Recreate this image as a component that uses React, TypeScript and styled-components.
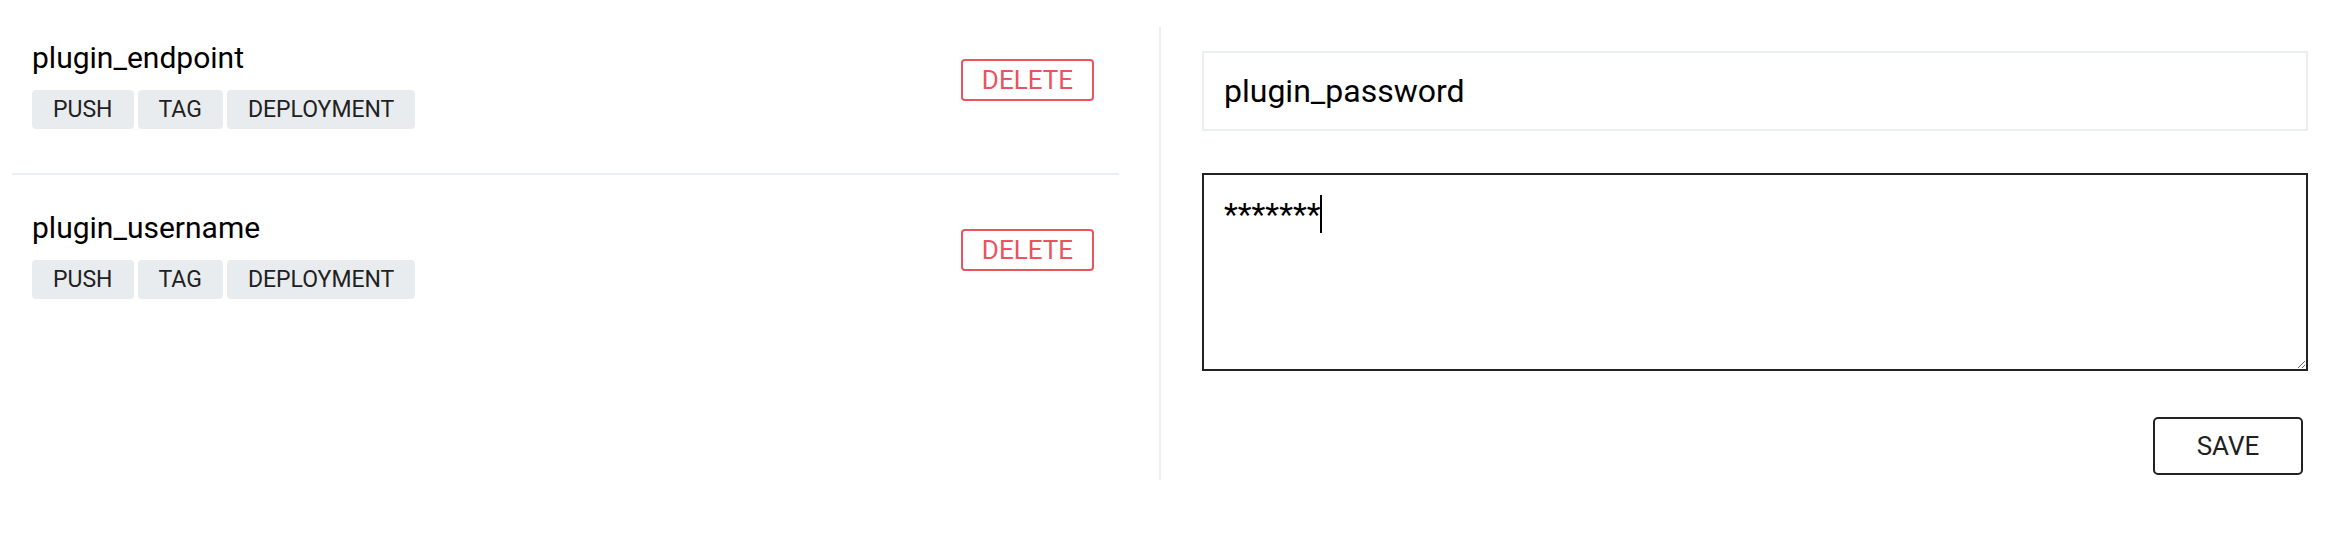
import React from 'react';
import styled, { createGlobalStyle } from 'styled-components';

const GlobalStyle = createGlobalStyle`
  html, body {
    margin: 0;
    padding: 0;
    background: #fff;
    font-family: Roboto, 'Liberation Sans', sans-serif;
  }
  * {
    box-sizing: border-box;
  }
`;

const Page = styled.div`
  display: flex;
  align-items: flex-start;
  padding-top: 5px;
  width: 2332px;
`;

const SecretList = styled.div`
  flex: 0 0 1159px;
  padding: 0 40px 0 12px;
`;

const SecretItem = styled.div`
  display: flex;
  align-items: flex-start;
  justify-content: space-between;
  padding: 35px 25px 44px 20px;

  & + & {
    border-top: 2px solid #eceff1;
  }
`;

const SecretInfo = styled.div`
  display: flex;
  flex-direction: column;
`;

const SecretName = styled.div`
  font-size: 30px;
  line-height: 35px;
  color: #000;
`;

const EventList = styled.div`
  display: flex;
  gap: 4px;
  margin-top: 15px;
`;

const EventTag = styled.span`
  display: inline-block;
  height: 39px;
  line-height: 39px;
  padding: 0 21px;
  font-size: 23px;
  color: #212121;
  background: #e9ecef;
  border-radius: 4px;
`;

const DeleteButton = styled.button`
  margin-top: 19px;
  height: 42px;
  padding: 0 19px;
  font-family: Roboto, 'Liberation Sans', sans-serif;
  font-size: 26px;
  line-height: 38px;
  color: #e9545e;
  background: #fff;
  border: 2px solid #e9545e;
  border-radius: 4px;
  cursor: pointer;
`;

const EditorPanel = styled.div`
  flex: 1;
  display: flex;
  flex-direction: column;
  margin-top: 22px;
  padding: 24px 24px 5px 41px;
  border-left: 2px solid #eceff1;
`;

const NameInput = styled.input`
  width: 100%;
  height: 80px;
  padding: 0 20px;
  font-family: Roboto, 'Liberation Sans', sans-serif;
  font-size: 32px;
  color: #000;
  border: 2px solid #eceff1;
  outline: none;
`;

const ValueWrap = styled.div`
  position: relative;
  margin-top: 42px;
`;

const ValueInput = styled.textarea`
  display: block;
  width: 100%;
  height: 198px;
  padding: 20px;
  font-family: Roboto, 'Liberation Sans', sans-serif;
  font-size: 32px;
  line-height: 38px;
  color: #000;
  border: 2px solid #222;
  outline: none;
  caret-color: transparent;
`;

const Caret = styled.span`
  position: absolute;
  left: 118px;
  top: 22px;
  width: 2px;
  height: 38px;
  background: #000;
`;

const Actions = styled.div`
  display: flex;
  justify-content: flex-end;
  margin-top: 46px;
  padding-right: 5px;
`;

const SaveButton = styled.button`
  width: 150px;
  height: 58px;
  font-family: Roboto, 'Liberation Sans', sans-serif;
  font-size: 26px;
  color: #212121;
  background: #fff;
  border: 2px solid #222;
  border-radius: 5px;
  cursor: pointer;
`;

const secrets = [
  { name: 'plugin_endpoint', events: ['PUSH', 'TAG', 'DEPLOYMENT'] },
  { name: 'plugin_username', events: ['PUSH', 'TAG', 'DEPLOYMENT'] },
];

export default function App() {
  return (
    <>
      <GlobalStyle />
      <Page>
        <SecretList>
          {secrets.map(secret => (
            <SecretItem key={secret.name}>
              <SecretInfo>
                <SecretName>{secret.name}</SecretName>
                <EventList>
                  {secret.events.map(ev => (
                    <EventTag key={ev}>{ev}</EventTag>
                  ))}
                </EventList>
              </SecretInfo>
              <DeleteButton>DELETE</DeleteButton>
            </SecretItem>
          ))}
        </SecretList>
        <EditorPanel>
          <NameInput defaultValue="plugin_password" />
          <ValueWrap>
            <ValueInput defaultValue="*******" />
            <Caret />
          </ValueWrap>
          <Actions>
            <SaveButton>SAVE</SaveButton>
          </Actions>
        </EditorPanel>
      </Page>
    </>
  );
}
